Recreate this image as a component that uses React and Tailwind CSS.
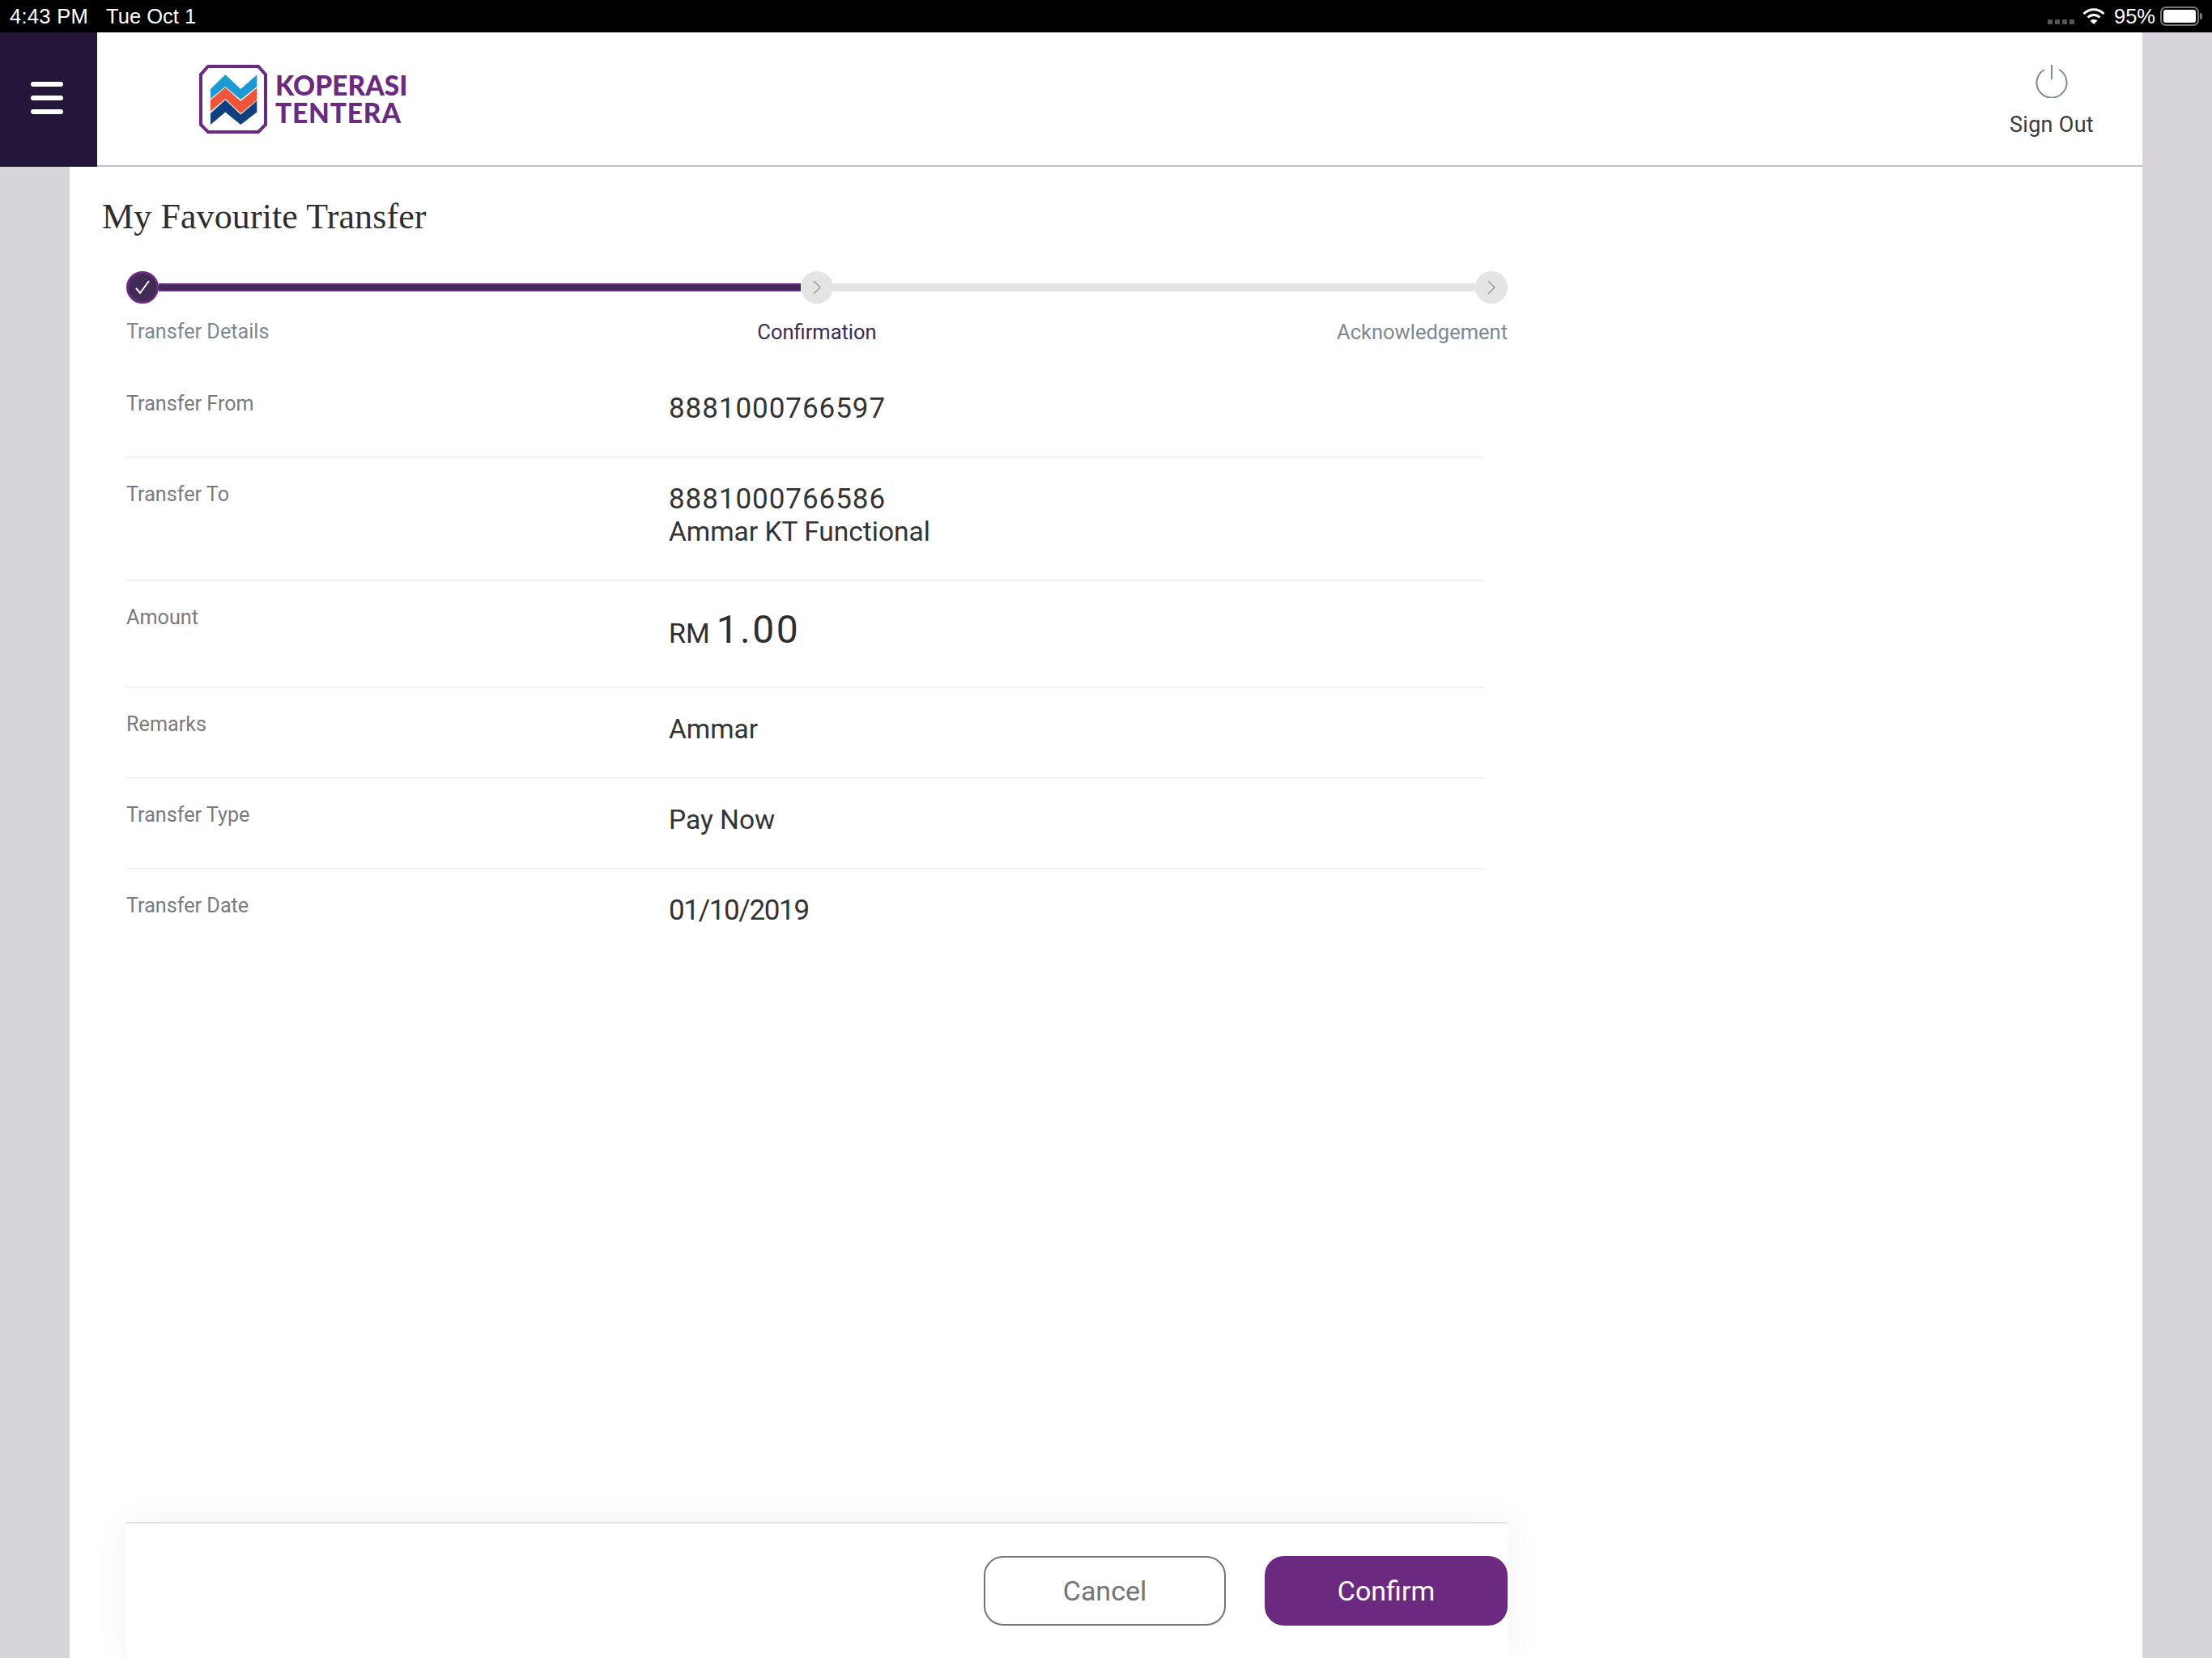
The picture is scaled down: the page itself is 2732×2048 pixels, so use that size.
import React from 'react';

const ROWS = [
  { label: 'Transfer From', value: [{ t: '8881000766597', c: 'text-[35px] tracking-[0.95px]' }], h: 'h-[112px]' },
  { label: 'Transfer To', value: [{ t: '8881000766586', c: 'text-[35px] tracking-[0.95px]' }, { t: 'Ammar KT Functional', c: 'text-[33.5px]' }], h: 'h-[152px]' },
  { label: 'Amount', amount: true, h: 'h-[132px]' },
  { label: 'Remarks', value: [{ t: 'Ammar', c: 'text-[33.5px]' }], h: 'h-[112px]' },
  { label: 'Transfer Type', value: [{ t: 'Pay Now', c: 'text-[33.5px]' }], h: 'h-[112px]' },
  { label: 'Transfer Date', value: [{ t: '01/10/2019', c: 'text-[35px] tracking-[-1.35px]' }], h: 'h-[112px]', last: true },
];

function Logo() {
  return (
    <div className="flex items-center gap-[9px] mt-[2px]">
      <svg width="85" height="86" viewBox="0 0 85 86" className="shrink-0">
        <polygon points="11,2 73,2 82,12 82,74 73,83 11,83 2,74 2,12" fill="#fff" stroke="#6b2a80" strokeWidth="4" />
        <polygon points="14,30 32.3,12.3 51.3,30 71.3,12.3 71.3,27 51.3,43 32.3,27 14,42" fill="#1b9ad6" />
        <polygon points="14,43.5 32.3,28 51.3,45 71.3,28.5 71.3,43.5 51.3,60 32.3,42 14,57.5" fill="#f0553a" />
        <polygon points="14,60 32.3,43.5 51.3,61.5 71.3,44.5 71.3,58.5 51.3,74 32.3,58.5 14,74" fill="#0e3f7e" />
      </svg>
      <div className="font-['Lato',sans-serif] font-black text-[#6b2a80] text-[33.5px] leading-[34px] mb-[2px]">
        <div>KOPERASI</div>
        <div className="tracking-[0.8px]">TENTERA</div>
      </div>
    </div>
  );
}

function StepCircle({ done }) {
  if (done) {
    return (
      <div className="w-[40px] h-[40px] rounded-full bg-[#3f2b56] border-[3px] border-[#6b2a80] flex items-center justify-center shrink-0">
        <svg width="20" height="18" viewBox="0 0 20 18" fill="none" stroke="#fff" strokeWidth="2">
          <path d="M2 10 L7 16 L18 1" />
        </svg>
      </div>
    );
  }
  return (
    <div className="w-[40px] h-[40px] rounded-full bg-[#e4e4e4] flex items-center justify-center shrink-0">
      <svg width="10" height="18" viewBox="0 0 10 18" fill="none" stroke="#9a9a9a" strokeWidth="1.5">
        <path d="M1 1 L9 9 L1 17" />
      </svg>
    </div>
  );
}

export default function App() {
  return (
    <div className="w-[2732px] h-[2048px] overflow-hidden flex flex-col bg-[#d7d5db] font-['Roboto',sans-serif]">
      {/* Status bar */}
      <div className="h-[40px] shrink-0 bg-black text-white flex items-center pl-[12px] pr-[12px] font-['Liberation_Sans',sans-serif] text-[25.5px]">
        <span className="tracking-[0.3px]">4:43 PM</span>
        <span className="ml-[22px]">Tue Oct 1</span>
        <div className="ml-auto flex items-center">
          <div className="flex gap-[3px] mt-[14px]">
            <span className="w-[6px] h-[6px] rounded-[1px] bg-[#555]"></span>
            <span className="w-[6px] h-[6px] rounded-[1px] bg-[#555]"></span>
            <span className="w-[6px] h-[6px] rounded-[1px] bg-[#555]"></span>
            <span className="w-[6px] h-[6px] rounded-[1px] bg-[#555]"></span>
          </div>
          <svg width="28" height="20" viewBox="0 0 28 20" className="ml-[10px]" fill="none" stroke="#fff" strokeWidth="3">
            <path d="M1.5 7 C9 0 19 0 26.5 7" />
            <path d="M6.5 11.5 C11 7.5 17 7.5 21.5 11.5" />
            <path d="M14 20 L9.5 15.5 C12 13.5 16 13.5 18.5 15.5 Z" fill="#fff" stroke="none" />
          </svg>
          <span className="ml-[11px]">95%</span>
          <div className="ml-[6px] w-[48px] h-[24px] rounded-[7px] border-2 border-[#777] p-[2px]">
            <div className="w-full h-full rounded-[3px] bg-white"></div>
          </div>
          <span className="ml-[1px] w-[3px] h-[8px] rounded-r-[2px] bg-[#777]"></span>
        </div>
      </div>

      {/* Header */}
      <div className="h-[166px] shrink-0 w-[2646px] flex bg-white">
        <div className="w-[120px] bg-[#24163a] flex flex-col justify-center gap-[11px] pl-[38px] pb-[4px]">
          <span className="w-[40px] h-[6px] rounded-full bg-white"></span>
          <span className="w-[40px] h-[6px] rounded-full bg-white"></span>
          <span className="w-[40px] h-[6px] rounded-full bg-white"></span>
        </div>
        <div className="flex-1 flex items-center justify-between border-b-2 border-[#bdbcd9] pl-[126px] pr-[60px]">
          <Logo />
          <div className="flex flex-col items-center gap-[18px] pt-[4px]">
            <svg width="42" height="42" viewBox="0 0 42 42" fill="none" stroke="#7d8b96" strokeWidth="2">
              <path d="M12 7 A18.5 18.5 0 1 0 30 7" />
              <path d="M21 1 L21 19" />
            </svg>
            <span className="text-[27px] tracking-[0.3px] leading-[30px] text-[#3a3a3a]">Sign Out</span>
          </div>
        </div>
      </div>

      {/* Page */}
      <div className="flex-1 ml-[86px] w-[2560px] bg-white flex flex-col min-h-0">
        <h1 className="font-['Liberation_Serif',serif] text-[44px] tracking-[0.1px] leading-[52px] text-[#2e2e2e] pl-[40px] pt-[36px]">My Favourite Transfer</h1>

        {/* Stepper */}
        <div className="ml-[70px] w-[1706px] mt-[41px]">
          <div className="flex items-center">
            <StepCircle done />
            <div className="flex-1 h-[10px] bg-[#3f2b56] border-y-2 border-[#6b2a80]"></div>
            <StepCircle />
            <div className="flex-1 h-[10px] bg-[#e4e4e4]"></div>
            <StepCircle />
          </div>
          <div className="grid grid-cols-3 mt-[20px] text-[25.5px] leading-[30px]">
            <span className="text-[25.2px] text-[#7d8890]">Transfer Details</span>
            <span className="text-center text-[#3c2a58]">Confirmation</span>
            <span className="text-right text-[#7d8890]">Acknowledgement</span>
          </div>
        </div>

        {/* Details */}
        <div className="ml-[70px] w-[1677px] mt-[29px]">
          {ROWS.map((row) => (
            <div key={row.label} className={`${row.h} flex items-start pt-[30px] ${row.last ? '' : 'border-b-2 border-[#f1f0f5]'}`}>
              <div className="w-[670px] text-[25.2px] leading-[30px] text-[#7a7a7f]">{row.label}</div>
              {row.amount ? (
                <div className="flex items-baseline text-[#2e2e2e] mt-[2px]">
                  <span className="text-[34px]">RM</span>
                  <span className="text-[48px] tracking-[2.5px] leading-[56px] ml-[8px]">1.00</span>
                </div>
              ) : (
                <div className="leading-[40px] text-[#333] mt-[1px]">
                  {row.value.map((v) => <div key={v.t} className={v.c}>{v.t}</div>)}
                </div>
              )}
            </div>
          ))}
        </div>

        {/* Footer */}
        <div className="mt-auto ml-[70px] w-[1706px] bg-white border-t-2 border-[#e4e4e4] shadow-[0_0_44px_rgba(0,0,0,0.06)] flex justify-end gap-[48px] pt-[40px] pb-[40px] text-[34px]">
          <button className="w-[299px] h-[86px] rounded-[24px] border-2 border-[#757575] text-[#757575]">Cancel</button>
          <button className="w-[300px] h-[86px] rounded-[24px] bg-[#6b2a80] text-white">Confirm</button>
        </div>
      </div>
    </div>
  );
}
